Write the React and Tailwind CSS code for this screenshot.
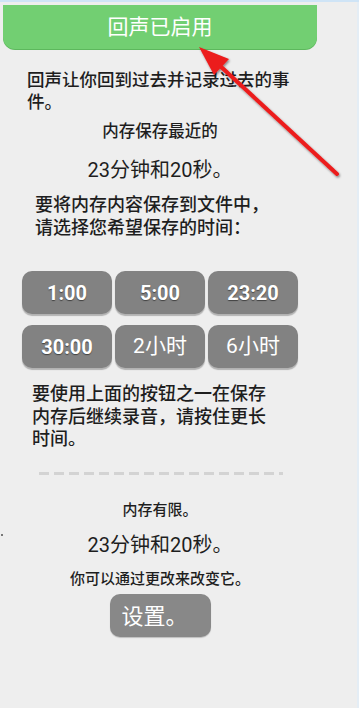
import React from "react";

const F = { fontFamily: 'Roboto, "Noto Sans CJK SC", "Noto Sans", sans-serif' };

function TimeBtn({ children, bold }) {
  return (
    <button
      className={
        "h-[43px] rounded-[10px] bg-[#828282] text-white shadow-[0_2px_1px_rgba(0,0,0,0.25)] flex items-center justify-center " +
        (bold ? "text-[20px] font-bold [text-shadow:0_1px_1px_rgba(0,0,0,0.5)]" : "text-[21px] font-normal")
      }
    >
      {children}
    </button>
  );
}

export default function App() {
  return (
    <div
      className="relative w-[359px] h-[708px] overflow-hidden bg-[#eeeeee] border-t-[2px] border-[#cfe4f6]"
      style={F}
    >
      <div className="absolute top-0 right-0 w-[2px] h-full bg-[#e4edf5]" />
      <div className="w-[320px] flex flex-col font-medium">
        {/* green header */}
        <div className="mx-[3px] mt-[3px] h-[44px] rounded-b-[12px] bg-[#72cf72] shadow-[0_1px_0_#5db85d] flex items-center justify-center">
          <span className="text-white text-[21px] font-normal leading-none">回声已启用</span>
        </div>

        <p className="mt-[20px] pl-[27px] w-[300px] text-[17.5px] leading-[22px] text-[#1e1e1e]">
          回声让你回到过去并记录过去的事件。
        </p>

        <p className="mt-[8px] text-center text-[16.5px] leading-[22px] text-[#1e1e1e]">内存保存最近的</p>
        <p className="mt-[14px] text-center text-[20px] font-normal leading-[26px] text-[#1e1e1e]">23分钟和20秒。</p>

        <p className="mt-[10px] pl-[35px] text-[18px] leading-[23px] text-[#1e1e1e]">
          要将内存内容保存到文件中，
          <br />
          请选择您希望保存的时间：
        </p>

        <div className="mt-[32px] ml-[22px] grid grid-cols-[90px_90px_90px] gap-x-[3px] gap-y-[11px]">
          <TimeBtn bold>1:00</TimeBtn>
          <TimeBtn bold>5:00</TimeBtn>
          <TimeBtn bold>23:20</TimeBtn>
          <TimeBtn bold>30:00</TimeBtn>
          <TimeBtn>2小时</TimeBtn>
          <TimeBtn>6小时</TimeBtn>
        </div>

        <p className="mt-[15px] pl-[32px] w-[276px] text-[18px] leading-[22.5px] text-[#1e1e1e]">
          要使用上面的按钮之一在保存内存后继续录音，请按住更长时间。
        </p>

        <div className="mt-[21px] ml-[39px] w-[244px] h-[3px] bg-[repeating-linear-gradient(90deg,#d3d3d3_0px,#d3d3d3_10px,transparent_10px,transparent_15px)]" />

        <p className="mt-[25px] text-center text-[15px] leading-[20px] text-[#1e1e1e]">内存有限。</p>
        <p className="mt-[12px] text-center text-[20px] font-normal leading-[26px] text-[#1e1e1e]">23分钟和20秒。</p>
        <p className="mt-[11px] text-center text-[15px] leading-[20px] text-[#1e1e1e]">你可以通过更改来改变它。</p>

        <div className="mt-[5px] flex justify-center">
          <button className="w-[101px] h-[43px] rounded-[10px] bg-[#888888] shadow-[0_1px_1px_rgba(0,0,0,0.2)] text-white font-normal text-[22px] leading-none text-left pl-[12px] pt-[4px]">
            设置。
          </button>
        </div>
      </div>

      <div className="absolute left-[1px] top-[532px] w-[2px] h-[2px] bg-[#777]" />

      <svg className="absolute left-0 top-0 pointer-events-none" width="359" height="708">
        <defs>
          <filter id="sh" x="-20%" y="-20%" width="140%" height="140%">
            <feDropShadow dx="1" dy="1.5" stdDeviation="1.2" floodColor="#000" floodOpacity="0.45" />
          </filter>
        </defs>
        <g filter="url(#sh)">
          <line x1="337" y1="172" x2="218" y2="62" stroke="#ec1c1c" strokeWidth="4" strokeLinecap="round" />
          <polygon points="199,45 229,57 214,73" fill="#ec1c1c" />
        </g>
      </svg>
    </div>
  );
}
